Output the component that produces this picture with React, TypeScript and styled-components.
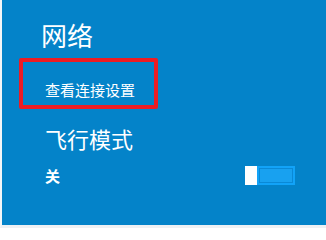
import { createGlobalStyle, styled } from "styled-components";

const GlobalStyle = createGlobalStyle`
  html, body {
    margin: 0;
    padding: 0;
    background: #ffffff;
  }
  * {
    box-sizing: border-box;
  }
`;

function App() {
  return (
    <>
      <GlobalStyle />
      <Panel>
        <Title>网络</Title>
        <LinkBox>
          <LinkText>查看连接设置</LinkText>
        </LinkBox>
        <SectionTitle>飞行模式</SectionTitle>
        <ToggleRow>
          <StateLabel>关</StateLabel>
          <Switch>
            <Thumb />
            <Track />
          </Switch>
        </ToggleRow>
      </Panel>
    </>
  );
}

export default App;

const Panel = styled.div`
  display: flex;
  flex-direction: column;
  width: 326px;
  height: 228px;
  border-left: 2px solid #f4f6f8;
  border-bottom: 3px solid #eef1f4;
  background-color: #0483c9;
  color: #ffffff;
  font-family: "Noto Sans CJK SC", "Noto Sans", sans-serif;
`;

const Title = styled.div`
  margin: 20px 0 0 39px;
  font-size: 26px;
  line-height: 30px;
  font-weight: 400;
`;

const LinkBox = styled.div`
  display: flex;
  align-items: flex-end;
  width: 139px;
  height: 51px;
  margin: 8px 0 0 17px;
  padding: 0 0 7px 22px;
  border: 4px solid #ec1c24;
  border-radius: 2px;
`;

const LinkText = styled.span`
  font-size: 15px;
  line-height: 17px;
`;

const SectionTitle = styled.div`
  margin: 16px 0 0 43px;
  font-size: 22px;
  line-height: 27px;
  font-weight: 400;
`;

const ToggleRow = styled.div`
  display: flex;
  align-items: center;
  justify-content: space-between;
  width: 250px;
  margin: 14px 0 0 43px;
`;

const StateLabel = styled.span`
  font-size: 15px;
  line-height: 19px;
  font-weight: 700;
`;

const Switch = styled.div`
  display: flex;
  height: 19px;
`;

const Thumb = styled.div`
  width: 12px;
  background-color: #ffffff;
`;

const Track = styled.div`
  width: 38px;
  background-color: #18a1f0;
  box-shadow: inset 0 0 0 2px #12a3f8, inset 0 0 0 3px #0a89d6;
`;
